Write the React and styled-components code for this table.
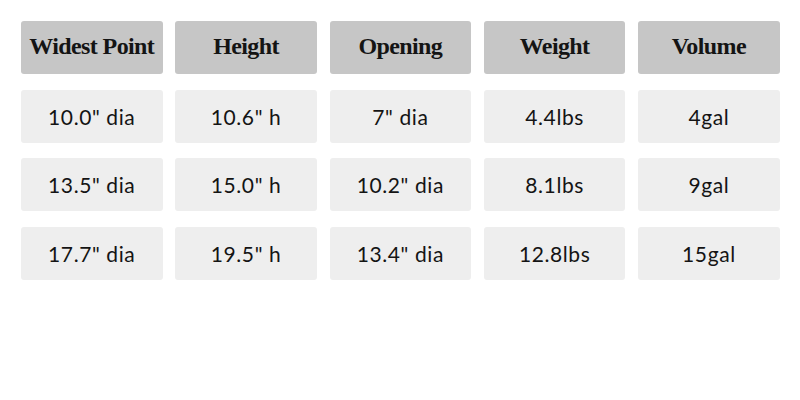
import styled, { createGlobalStyle } from "styled-components";

const GlobalStyle = createGlobalStyle`
    body {
        margin: 0;
        background: #ffffff;
    }
`;

const columns = ["Widest Point", "Height", "Opening", "Weight", "Volume"];

const rows = [
    ['10.0" dia', '10.6" h', '7" dia', "4.4lbs", "4gal"],
    ['13.5" dia', '15.0" h', '10.2" dia', "8.1lbs", "9gal"],
    ['17.7" dia', '19.5" h', '13.4" dia', "12.8lbs", "15gal"],
];

export default function App()
{
    return (
        <>
            <GlobalStyle />
            <Table>
                {columns.map(name => <Cell key={name} $head>{name}</Cell>)}
                {rows.map((row, i) =>
                    row.map((value, j) => <Cell key={`${i}-${j}`}>{value}</Cell>)
                )}
            </Table>
        </>
    );
}

const Table = styled.div`
    display: grid;
    grid-template-columns: repeat(5, 141.5px);
    grid-auto-rows: 53px;
    column-gap: 12.8px;
    row-gap: 15.5px;
    padding: 21px 0 0 21px;
`;

const Cell = styled.div`
    display: flex;
    align-items: center;
    justify-content: center;
    border-radius: 3px;
    background: ${p => p.$head ? "#c6c6c6" : "#eeeeee"};
    color: #141414;
    font-family: ${p => p.$head ? '"Liberation Serif", serif' : 'Lato, sans-serif'};
    font-weight: ${p => p.$head ? 700 : 400};
    font-size: ${p => p.$head ? "24px" : "21px"};
    letter-spacing: ${p => p.$head ? "-0.6px" : "0.6px"};
    padding-bottom: ${p => p.$head ? "2px" : "0"};
`;
